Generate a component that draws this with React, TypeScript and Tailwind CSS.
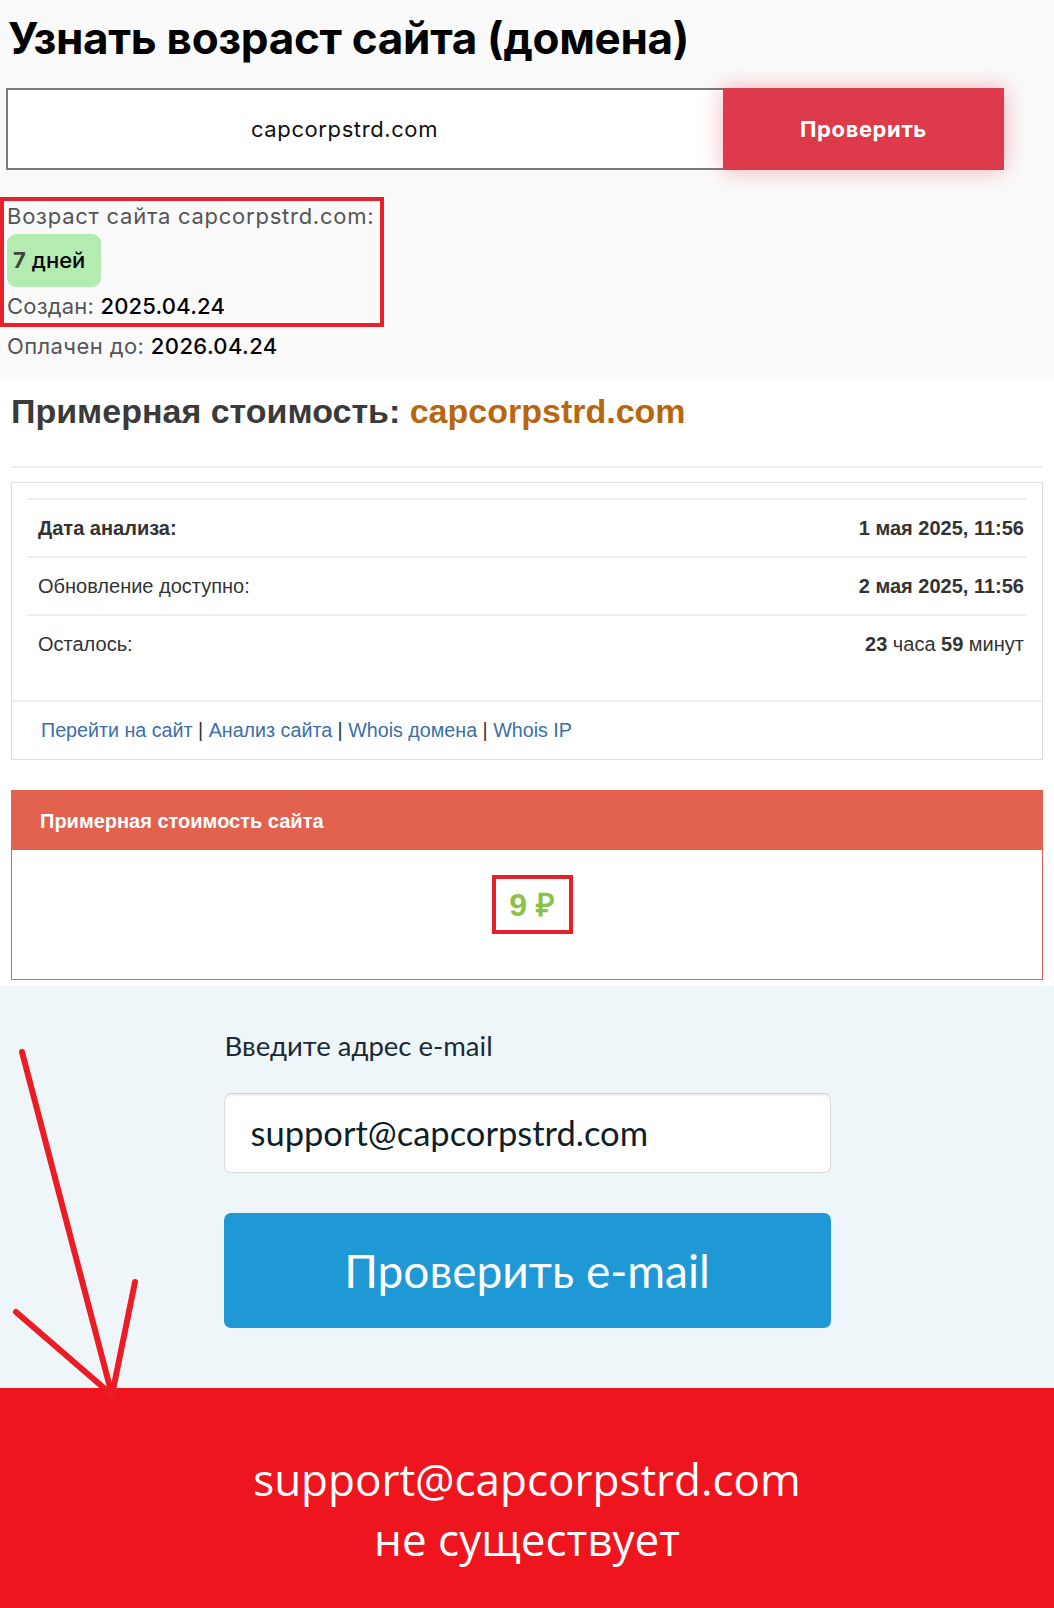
export default function App() {
  const mont = { fontFamily: "Inter, 'Open Sans', sans-serif" };
  return (
    <div className="relative w-[1054px] min-h-[1608px] bg-white">
      {/* age checker */}
      <section className="bg-[#fafafa] h-[380px] px-[6px] pt-[12px]" style={mont}>
        <h1 className="pl-[2px] text-[44px] leading-[52px] font-bold text-black tracking-[-0.3px]">
          Узнать возраст сайта (домена)
        </h1>
        <div className="mt-[24px] flex h-[82px] w-[998px]">
          <div className="flex flex-1 items-center justify-center border-2 border-r-0 border-[#7a7a7a] bg-white pr-[42px] text-[22px] tracking-[0.6px] text-[#111]">
            capcorpstrd.com
          </div>
          <button
            className="w-[281px] bg-[#dd3b4b] text-[22px] font-bold tracking-[0.6px] text-white shadow-[0_0_22px_rgba(230,40,60,0.35)]"
            style={mont}
          >
            Проверить
          </button>
        </div>
        <div className="-ml-[6px] mt-[27px] w-[384px] border-4 border-[#e5212b] pl-[3px] pb-[2px]">
          <div className="text-[22px] leading-[30px] tracking-[0.75px] text-[#555]">Возраст сайта capcorpstrd.com:</div>
          <div className="mt-[3px] flex h-[53px] w-[94px] items-center rounded-[9px] bg-[#b3ebb0] px-[6px] text-[22px] text-black">
            <b className="mr-[6px] font-bold text-[#444]">7</b>
            <span className="font-medium">дней</span>
          </div>
          <div className="mt-[4px] text-[22px] leading-[30px] tracking-[0.2px] text-[#555]">
            Создан: <span className="font-medium text-black">2025.04.24</span>
          </div>
        </div>
        <div className="mt-[4px] pl-[1px] text-[22px] leading-[30px] tracking-[0.4px] text-[#555]">
          Оплачен до: <span className="font-medium text-black">2026.04.24</span>
        </div>
      </section>

      {/* estimate */}
      <section className="px-[11px] pb-[6px]" style={{ fontFamily: "'Liberation Sans', Arial, sans-serif" }}>
        <h2 className="mt-[11px] text-[34px] font-bold leading-[40px] text-[#3a3a3a]">
          Примерная стоимость: <span className="text-[#b8660f]">capcorpstrd.com</span>
        </h2>
        <hr className="mt-[35px] border-t-2 border-[#eeeeee]" />
        <div className="mt-[14px] border border-[#dddddd] bg-white">
          <div className="px-[15px] pt-[15px] pb-[28px]">
            <div className="flex h-[58px] items-center justify-between border-t-2 border-[#eeeeee] pl-[11px] pr-[3px] text-[20px] text-[#333]">
              <span className="font-bold">Дата анализа:</span>
              <span className="font-bold">1 мая 2025, 11:56</span>
            </div>
            <div className="flex h-[58px] items-center justify-between border-t-2 border-[#eeeeee] pl-[11px] pr-[3px] text-[20px] text-[#333]">
              <span>Обновление доступно:</span>
              <span className="font-bold">2 мая 2025, 11:56</span>
            </div>
            <div className="flex h-[58px] items-center justify-between border-t-2 border-[#eeeeee] pl-[11px] pr-[3px] text-[20px] text-[#333]">
              <span>Осталось:</span>
              <span>
                <b>23</b> часа <b>59</b> минут
              </span>
            </div>
          </div>
          <div className="flex h-[59px] items-center border-t-2 border-[#eeeeee] px-[29px] text-[19.7px] text-[#333]">
            <span className="text-[#3b6ea5]">Перейти на сайт</span>&nbsp;|&nbsp;
            <span className="text-[#3b6ea5]">Анализ сайта</span>&nbsp;|&nbsp;
            <span className="text-[#3b6ea5]">Whois домена</span>&nbsp;|&nbsp;
            <span className="text-[#3b6ea5]">Whois IP</span>
          </div>
        </div>
        <div className="mt-[30px] border border-[#e2614f] bg-white">
          <div className="flex h-[59px] items-center bg-[#e2614f] px-[28px] text-[20px] font-bold text-white">
            Примерная стоимость сайта
          </div>
          <div className="flex h-[129px] items-center justify-center pb-[20px] pl-[10px]">
            <div className="flex h-[59px] w-[81px] items-center justify-center border-4 border-[#e5212b] text-[32px] font-bold text-[#8bc34a]">
              9 ₽
            </div>
          </div>
        </div>
      </section>

      {/* email check */}
      <section className="h-[402px] bg-[#eef6fa] pt-[44px]" style={{ fontFamily: "Lato, 'Open Sans', sans-serif" }}>
        <div className="mx-auto w-[607px]">
          <div className="pl-[1px] text-[27.5px] leading-[32px] text-[#1b2b36]">Введите адрес e-mail</div>
          <div className="mt-[31px] flex h-[80px] items-center rounded-[7px] border border-[#dcdcdc] border-t-[#cfcfcf] bg-white px-[26px] text-[34.5px] text-[#0f1f2a] shadow-[inset_0_2px_2px_rgba(0,0,0,0.06)]">
            support@capcorpstrd.com
          </div>
          <button className="mt-[40px] flex h-[115px] w-full items-center justify-center rounded-[7px] bg-[#1f99d5] text-[46px] text-white">
            Проверить e-mail
          </button>
        </div>
      </section>

      {/* result */}
      <section
        className="flex h-[220px] flex-col items-center bg-[#ef151f] pt-[61px] text-[44px] leading-[60px] text-white"
        style={{ fontFamily: "'Open Sans', sans-serif" }}
      >
        <div>support@capcorpstrd.com</div>
        <div>не существует</div>
      </section>

      {/* hand-drawn arrow */}
      <svg
        className="pointer-events-none absolute left-0 top-[1040px]"
        width="160"
        height="370"
        viewBox="0 1040 160 370"
      >
        <g stroke="#ec1c24" strokeWidth="6" strokeLinecap="round" fill="none">
          <path d="M22 1052 L112 1395" />
          <path d="M135 1282 L112 1395" />
          <path d="M16 1312 L112 1395" />
        </g>
      </svg>
    </div>
  );
}
